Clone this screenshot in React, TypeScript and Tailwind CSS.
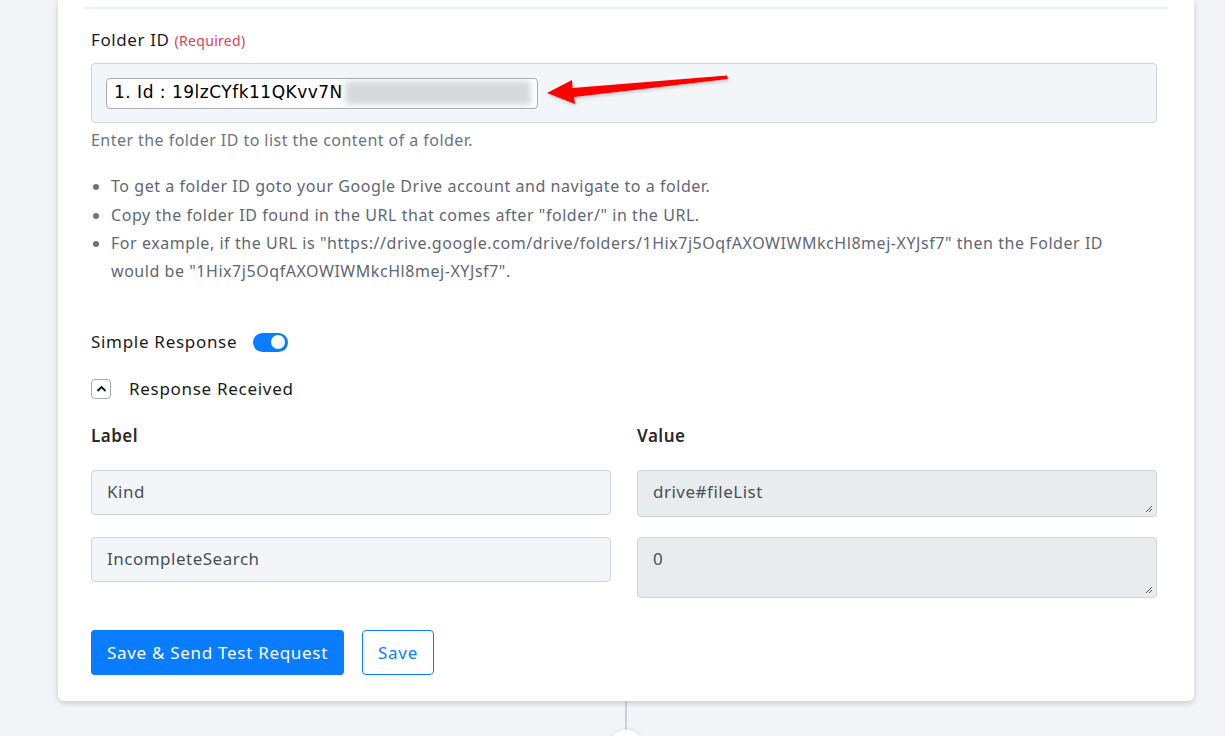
import React from "react";

const font = { fontFamily: "'Noto Sans', 'Open Sans', sans-serif" };

function Arrow() {
  return (
    <svg
      className="absolute pointer-events-none"
      style={{ left: 540, top: 70 }}
      width="200"
      height="45"
      viewBox="540 70 200 45"
    >
      <defs>
        <filter id="arrowShadow" x="-10%" y="-30%" width="130%" height="180%">
          <feDropShadow dx="1" dy="2" stdDeviation="1.5" floodColor="#000" floodOpacity="0.18" />
        </filter>
      </defs>
      <path
        d="M547 93 L572 80 L572.5 88 L727 75.5 L728 79 L574 97 L575 104 Z"
        fill="#ff0000"
        filter="url(#arrowShadow)"
      />
    </svg>
  );
}

function Toggle() {
  return (
    <div className="w-[35px] h-[19px] rounded-full bg-[#0a7cff] flex items-center justify-end pr-[3px]">
      <div className="w-[14px] h-[14px] rounded-full bg-white" />
    </div>
  );
}

function Field({ children, textarea, h }: { children: React.ReactNode; textarea?: boolean; h: string }) {
  return (
    <div
      className={`relative rounded-[4px] border border-[#ced4da] px-[15px] pt-[9px] text-[17px] tracking-[0.5px] text-[#4a4f57] ${h} ${
        textarea ? "bg-[#e9ecef]" : "bg-[#f3f6f9]"
      }`}
    >
      {children}
      {textarea && (
        <svg className="absolute right-[3px] bottom-[3px]" width="8" height="8" viewBox="0 0 8 8">
          <path d="M7 1 L1 7 M7 4 L4 7" stroke="#555" strokeWidth="1" />
        </svg>
      )}
    </div>
  );
}

export default function App() {
  return (
    <div className="w-[1225px] h-[736px] bg-[#f2f4f7] overflow-hidden relative" style={font}>
      <div className="ml-[58px] w-[1136px] bg-white rounded-b-[6px] shadow-[0_2px_6px_rgba(0,0,0,0.18)] px-[26px] pt-[7px] pb-[26px] relative">
        <div className="h-[2px] bg-[#e9f1fb]" />
        <div className="pl-[7px] pr-[11px]">
          <div className="mt-[19px] flex items-baseline gap-[5px] leading-[24px]">
            <span className="text-[17px] tracking-[0.6px] text-[#1b1b1b]">Folder ID</span>
            <span className="text-[14px] tracking-[0.3px] text-[#e0405a]">(Required)</span>
          </div>
          <div className="mt-[10px] h-[60px] rounded-[4px] border border-[#d2d6dc] bg-[#f3f6f9] flex items-center pl-[14px]">
            <div className="w-[432px] h-[31px] bg-white border border-[#a9acb0] rounded-[4px] flex items-center pl-[7px] overflow-hidden">
              <span
                className="text-black whitespace-nowrap tracking-[0.5px]"
                style={{ fontFamily: "'DejaVu Sans', sans-serif", fontSize: 17 }}
              >
                1. Id : 19lzCYfk11QKvv7N
              </span>
              <span className="ml-[2px] h-[24px] w-[186px] bg-[#d6d9dc] blur-[3px] rounded-[3px]" />
            </div>
          </div>
          <p className="mt-[5px] text-[16px] leading-[24px] tracking-[0.45px] text-[#6c7480]">
            Enter the folder ID to list the content of a folder.
          </p>
          <ul className="mt-[20px] list-disc pl-[20px] pr-[30px] text-[16px] leading-[28.5px] tracking-[0.55px] text-[#5f6773] marker:text-[#6c7480]">
            <li>To get a folder ID goto your Google Drive account and navigate to a folder.</li>
            <li>Copy the folder ID found in the URL that comes after "folder/" in the URL.</li>
            <li className="leading-[28px]">
              For example, if the URL is "https://drive.google.com/drive/folders/1Hix7j5OqfAXOWIWMkcHl8mej-XYJsf7" then the Folder ID would be "1Hix7j5OqfAXOWIWMkcHl8mej-XYJsf7".
            </li>
          </ul>
          <div className="mt-[45px] flex items-center gap-[16px] leading-[24px]">
            <span className="text-[17px] tracking-[0.7px] text-[#1b1b1b]">Simple Response</span>
            <Toggle />
          </div>
          <div className="mt-[23px] flex items-center gap-[18px] leading-[24px]">
            <div className="w-[20px] h-[20px] rounded-[4px] border border-[#a6abb2] flex items-center justify-center">
              <svg width="11" height="8" viewBox="0 0 11 8">
                <path d="M1.5 6 L5.5 2 L9.5 6" stroke="#111" strokeWidth="1.8" fill="none" />
              </svg>
            </div>
            <span className="text-[17px] tracking-[0.7px] text-[#1b1b1b]">Response Received</span>
          </div>
          <div className="mt-[23px] grid grid-cols-2 gap-x-[26px] leading-[24px]">
            <div className="text-[17px] font-semibold tracking-[0.5px] text-[#2a2a2a]">Label</div>
            <div className="text-[17px] font-semibold tracking-[0.5px] text-[#2a2a2a]">Value</div>
            <div className="mt-[22px] flex flex-col gap-[22px]">
              <Field h="h-[45px]">Kind</Field>
              <Field h="h-[45px]">IncompleteSearch</Field>
            </div>
            <div className="mt-[22px] flex flex-col gap-[20px]">
              <Field h="h-[47px]" textarea>drive#fileList</Field>
              <Field h="h-[61px]" textarea>0</Field>
            </div>
          </div>
          <div className="mt-[32px] flex gap-[18px]">
            <button className="h-[45px] px-[16px] rounded-[4px] bg-[#0a7cff] text-white text-[17px] tracking-[0.7px]">
              Save &amp; Send Test Request
            </button>
            <button className="h-[45px] px-[15px] rounded-[4px] border border-[#0a7cff] text-[#0a7cff] text-[17px] tracking-[0.7px] bg-white">
              Save
            </button>
          </div>
        </div>
      </div>
      <div className="ml-[625px] w-[2px] h-[28px] bg-[#cdd1d7]" />
      <div className="absolute left-[608px] top-[730px] w-[36px] h-[36px] rounded-full bg-white shadow-[0_0_4px_rgba(0,0,0,0.12)]" />
      <Arrow />
    </div>
  );
}
